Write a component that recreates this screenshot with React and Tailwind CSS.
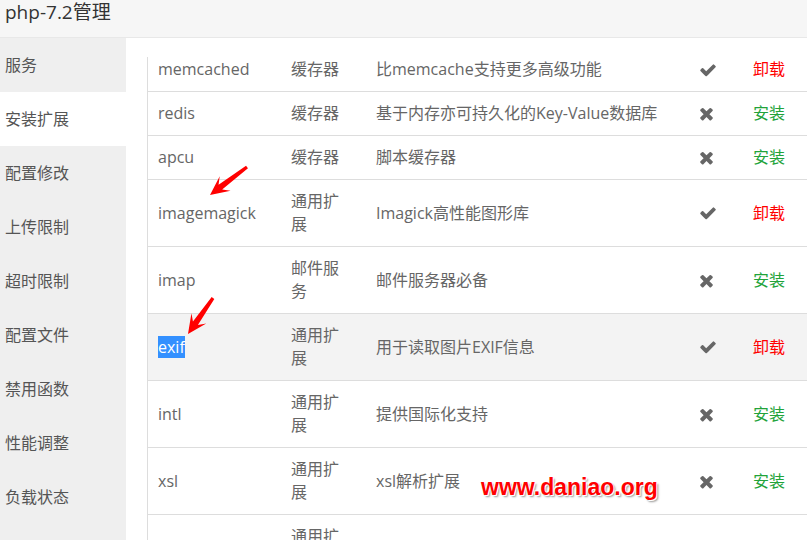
import React from "react";

const CHECK =
  "M1671 566q0 40-28 68l-724 724-136 136q-28 28-68 28t-68-28l-136-136-362-362q-28-28-28-68t28-68l136-136q28-28 68-28t68 28l294 295 656-657q28-28 68-28t68 28l136 136q28 28 28 68z";
const TIMES =
  "M1490 1322q0 40-28 68l-136 136q-28 28-68 28t-68-28l-294-294-294 294q-28 28-68 28t-68-28l-136-136q-28-28-28-68t28-68l294-294-294-294q-28-28-28-68t28-68l136-136q28-28 68-28t68 28l294 294 294-294q28-28 68-28t68 28l136 136q28 28 28 68t-28 68l-294 294 294 294q28 28 28 68z";

function Icon({ ok }) {
  return ok ? (
    <svg width="18" height="18" viewBox="0 0 1792 1792" className="fill-[#666]">
      <path d={CHECK} />
    </svg>
  ) : (
    <svg width="19" height="19" viewBox="0 0 1792 1792" className="fill-[#666] -ml-[3px]">
      <path d={TIMES} />
    </svg>
  );
}

function Arrow({ tail, tip, cls }) {
  const dx = tip[0] - tail[0];
  const dy = tip[1] - tail[1];
  const len = Math.hypot(dx, dy);
  const u = [dx / len, dy / len];
  const n = [-u[1], u[0]];
  const p = (base, a, b) => [base[0] + u[0] * a + n[0] * b, base[1] + u[1] * a + n[1] * b];
  const headLen = 19;
  const notch = 13;
  const hw = 9;
  const pts = [
    tip,
    p(tip, -headLen, hw),
    p(tip, -notch, 3),
    p(tail, 0, 1.6),
    p(tail, 0, -1.6),
    p(tip, -notch, -3),
    p(tip, -headLen, -hw),
  ];
  const minX = Math.min(tail[0], tip[0]) - 12;
  const minY = Math.min(tail[1], tip[1]) - 12;
  const w = Math.abs(dx) + 24;
  const h = Math.abs(dy) + 24;
  return (
    <svg
      className={"absolute " + cls}
      width={w}
      height={h}
      viewBox={`${minX} ${minY} ${w} ${h}`}
    >
      <polygon points={pts.map((q) => q.join(",")).join(" ")} fill="#ff0000" />
    </svg>
  );
}

const rows = [
  { name: "memcached", type: "缓存器", desc: "比memcache支持更多高级功能", ok: true },
  { name: "redis", type: "缓存器", desc: "基于内存亦可持久化的Key-Value数据库", ok: false },
  { name: "apcu", type: "缓存器", desc: "脚本缓存器", ok: false },
  { name: "imagemagick", type: "通用扩展", desc: "Imagick高性能图形库", ok: true },
  { name: "imap", type: "邮件服务", desc: "邮件服务器必备", ok: false },
  { name: "exif", type: "通用扩展", desc: "用于读取图片EXIF信息", ok: true, hl: true },
  { name: "intl", type: "通用扩展", desc: "提供国际化支持", ok: false },
  { name: "xsl", type: "通用扩展", desc: "xsl解析扩展", ok: false },
  { name: "readline", type: "通用扩展", desc: "读取行扩展", ok: false },
];

const menu = ["服务", "安装扩展", "配置修改", "上传限制", "超时限制", "配置文件", "禁用函数", "性能调整", "负载状态"];

export default function App() {
  return (
    <div className="relative w-[807px] h-[540px] overflow-hidden bg-white font-['Open_Sans','Noto_Sans_CJK_SC',sans-serif]">
      <div className="h-[38px] bg-[#f6f6f6] border-b border-[#e8e8e8] pl-[5px] pt-px text-[19px] leading-[22px] text-[#333]">
        php-7.2管理
      </div>
      <div className="flex h-[502px]">
        <div className="w-[126px] shrink-0 bg-[#efefef] flex flex-col">
          {menu.map((m, i) => (
            <div
              key={m}
              className={
                "h-[54px] shrink-0 flex items-center pl-[5px] text-[16px] text-[#555] " +
                (i === 1 ? "bg-white" : "")
              }
            >
              {m}
            </div>
          ))}
        </div>
        <div className="flex-1 pl-[21px] pt-[19px] overflow-hidden">
          <div className="h-full overflow-hidden border-l border-[#ddd] w-[700px]">
            <div className="-mt-[9px]">
              {rows.map((r) => (
                <div
                  key={r.name}
                  className={
                    "flex items-center border-b border-[#ddd] py-[10px] text-[16px] leading-[23px] text-[#666] " +
                    (r.hl ? "bg-[#f3f3f3]" : "")
                  }
                >
                  <div className="w-[132px] shrink-0 pl-[10px]">
                    {r.hl ? <span className="bg-[#3390ff] text-white">{r.name}</span> : r.name}
                  </div>
                  <div className="w-[85px] shrink-0 pl-[11px]">
                    <div className="w-[52px]">{r.type}</div>
                  </div>
                  <div className="w-[325px] shrink-0 pl-[11px]">{r.desc}</div>
                  <div className="w-[36px] shrink-0 flex justify-center">
                    <Icon ok={r.ok} />
                  </div>
                  <div className={"shrink-0 pl-[27px] " + (r.ok ? "text-[#ff0000]" : "text-[#22a33a]")}>
                    {r.ok ? "卸载" : "安装"}
                  </div>
                </div>
              ))}
            </div>
          </div>
        </div>
      </div>
      <Arrow tail={[247, 167]} tip={[210, 195]} cls="left-[198px] top-[155px]" />
      <Arrow tail={[213, 298]} tip={[188, 334]} cls="left-[176px] top-[286px]" />
      <div className="absolute left-[481px] top-[476px] text-[23px] leading-[23px] font-bold text-[#ff0000] font-['Liberation_Sans',Arial,sans-serif] [text-shadow:1px_1px_0_#fff,-1px_-1px_0_#fff,2px_2px_2px_#999]">
        www.daniao.org
      </div>
    </div>
  );
}
